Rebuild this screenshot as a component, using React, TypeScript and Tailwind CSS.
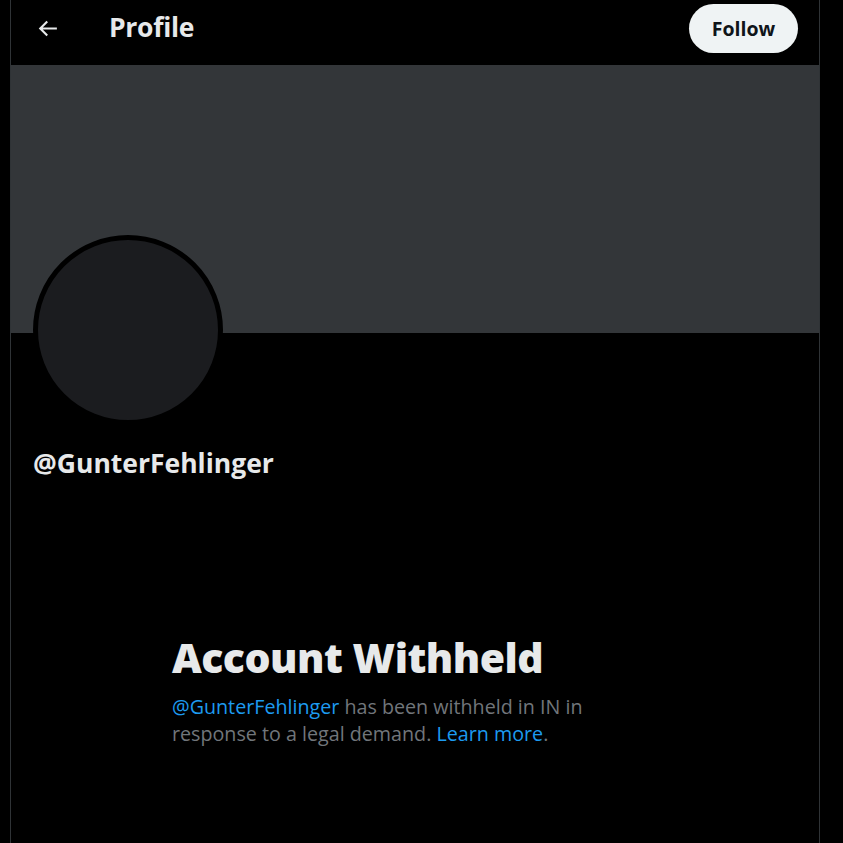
import React from 'react';

export default function App() {
  return (
    <div className="min-h-[843px] w-[843px] bg-black" style={{ fontFamily: '"Open Sans", "Liberation Sans", sans-serif' }}>
      <div className="ml-[10px] min-h-[843px] w-[810px] border-x border-[#2f3336]">
        {/* Header */}
        <div className="flex h-[65px] items-start justify-between pl-[24px] pr-[21px] pt-[4px]">
          <div className="flex h-[49px] items-center">
            <svg viewBox="0 0 24 24" className="-mt-[1px] h-[25px] w-[25px] fill-[#e7e9ea]">
              <path d="M7.414 13l5.043 5.04-1.414 1.42L3.586 12l7.457-7.46 1.414 1.42L7.414 11H21v2H7.414z" />
            </svg>
            <h1 className="-mt-[1px] ml-[49px] text-[26.5px] font-bold tracking-[-0.3px] text-[#e7e9ea]">Profile</h1>
          </div>
          <button className="h-[49px] w-[109px] rounded-full bg-[#eff3f4] text-[19.5px] font-bold text-[#0f1419]">
            Follow
          </button>
        </div>

        {/* Banner */}
        <div className="h-[268px] bg-[#333639]" />

        {/* Avatar */}
        <div className="-mt-[98px] ml-[22px] h-[190px] w-[190px] rounded-full border-[5px] border-black bg-[#1b1c1f]" />

        <div className="ml-[22px] mt-[22px] text-[26.5px] font-bold leading-[32px] text-[#e7e9ea]">@GunterFehlinger</div>

        {/* Withheld notice */}
        <div className="ml-[161px] mt-[154px] w-[430px]">
          <h2 className="text-[41px] font-extrabold leading-[48px] tracking-[-0.5px] text-[#e7e9ea]">Account Withheld</h2>
          <p className="mt-[12px] text-[19.7px] leading-[27px] text-[#71767b]">
            <span className="text-[#1d9bf0]">@GunterFehlinger</span> has been withheld in IN in response to a legal demand.{' '}
            <span className="text-[#1d9bf0]">Learn more</span>.
          </p>
        </div>
      </div>
    </div>
  );
}
